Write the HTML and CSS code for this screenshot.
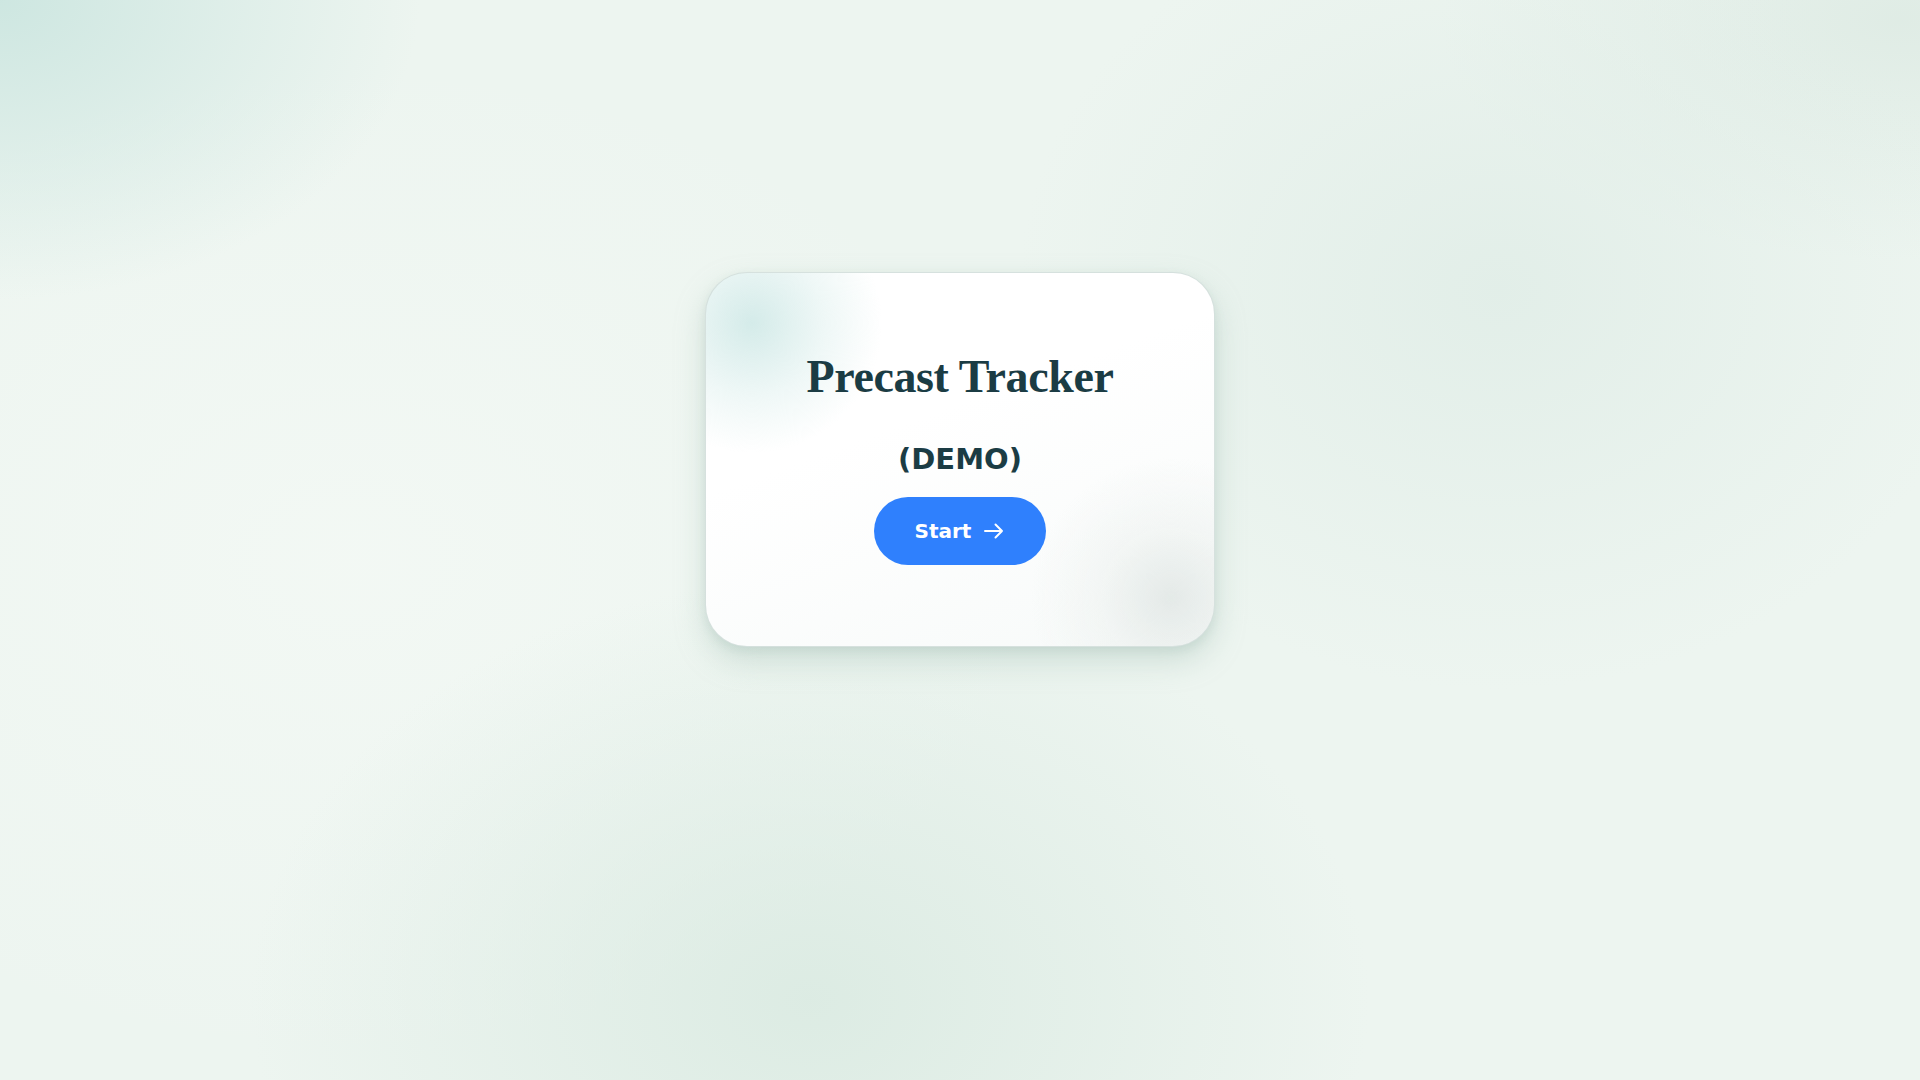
FILE: index.html
```html
<!DOCTYPE html>
<html lang="en">
<head>
<meta charset="utf-8">
<title>Precast Tracker (DEMO)</title>
<link rel="stylesheet" href="styles.css">
</head>
<body>
<main class="page">
  <section class="card">
    <h1 class="title">Precast Tracker</h1>
    <p class="subtitle">(DEMO)</p>
    <button class="start-btn" type="button">
      <span>Start</span>
      <svg class="arrow" viewBox="0 0 20 16" width="20" height="16" aria-hidden="true">
        <path d="M1 8 H18 M11.5 1.5 L18 8 L11.5 14.5" fill="none" stroke="#ffffff" stroke-width="2" stroke-linecap="round" stroke-linejoin="round"/>
      </svg>
    </button>
  </section>
</main>
</body>
</html>
```

FILE: styles.css
```css
* { box-sizing: border-box; }

html, body {
  margin: 0;
  padding: 0;
  height: 100%;
}

body {
  font-family: "DejaVu Sans", sans-serif;
  background-color: #edf5f0;
  background-image:
    radial-gradient(ellipse 420px 300px at 0px 0px, rgba(200, 228, 222, 0.85), rgba(200, 228, 222, 0) 100%),
    radial-gradient(ellipse 480px 400px at 1498px 290px, rgba(224, 237, 231, 0.85), rgba(224, 237, 231, 0) 100%),
    radial-gradient(ellipse 560px 420px at 810px 1000px, rgba(216, 233, 224, 0.8), rgba(216, 233, 224, 0) 100%),
    radial-gradient(ellipse 460px 240px at 1900px 20px, rgba(216, 231, 223, 0.65), rgba(216, 231, 223, 0) 100%),
    radial-gradient(ellipse 700px 500px at 350px 560px, rgba(244, 249, 245, 0.8), rgba(244, 249, 245, 0) 100%);
  overflow: hidden;
}

.page {
  min-height: 100vh;
  display: flex;
  justify-content: center;
  align-items: flex-start;
  padding-top: 272px;
}

.card {
  width: 510px;
  display: flex;
  flex-direction: column;
  align-items: center;
  padding: 76px 40px 81px;
  border-radius: 42px;
  border: 1px solid rgba(210, 222, 218, 0.9);
  background-color: #ffffff;
  background-image:
    radial-gradient(circle 130px at 46px 50px, rgba(210, 234, 232, 0.95), rgba(222, 240, 238, 0.5) 55%, rgba(255, 255, 255, 0) 100%),
    radial-gradient(circle 140px at 465px 325px, rgba(226, 232, 230, 0.9), rgba(236, 240, 238, 0.5) 50%, rgba(255, 255, 255, 0) 100%),
    linear-gradient(160deg, #ffffff 40%, #f7faf9 100%);
  box-shadow:
    0 14px 30px rgba(150, 180, 170, 0.35),
    0 4px 10px rgba(150, 180, 170, 0.2);
}

.title {
  margin: 0;
  font-family: "Liberation Serif", "Times New Roman", serif;
  font-weight: 700;
  font-size: 46px;
  line-height: 1.2;
  letter-spacing: -0.4px;
  color: #1b3c44;
}

.subtitle {
  margin: 38px 0 0;
  font-family: "DejaVu Sans", sans-serif;
  font-weight: 700;
  font-size: 29px;
  line-height: 1.2;
  color: #1b3c44;
}

.start-btn {
  margin-top: 20px;
  height: 68px;
  display: inline-flex;
  align-items: center;
  gap: 13px;
  padding: 0 42px 0 41px;
  border: none;
  border-radius: 34px;
  background: #2f80fd;
  color: #ffffff;
  font-family: "DejaVu Sans", sans-serif;
  font-weight: 700;
  font-size: 20px;
  cursor: pointer;
}

.arrow {
  display: block;
}
```
